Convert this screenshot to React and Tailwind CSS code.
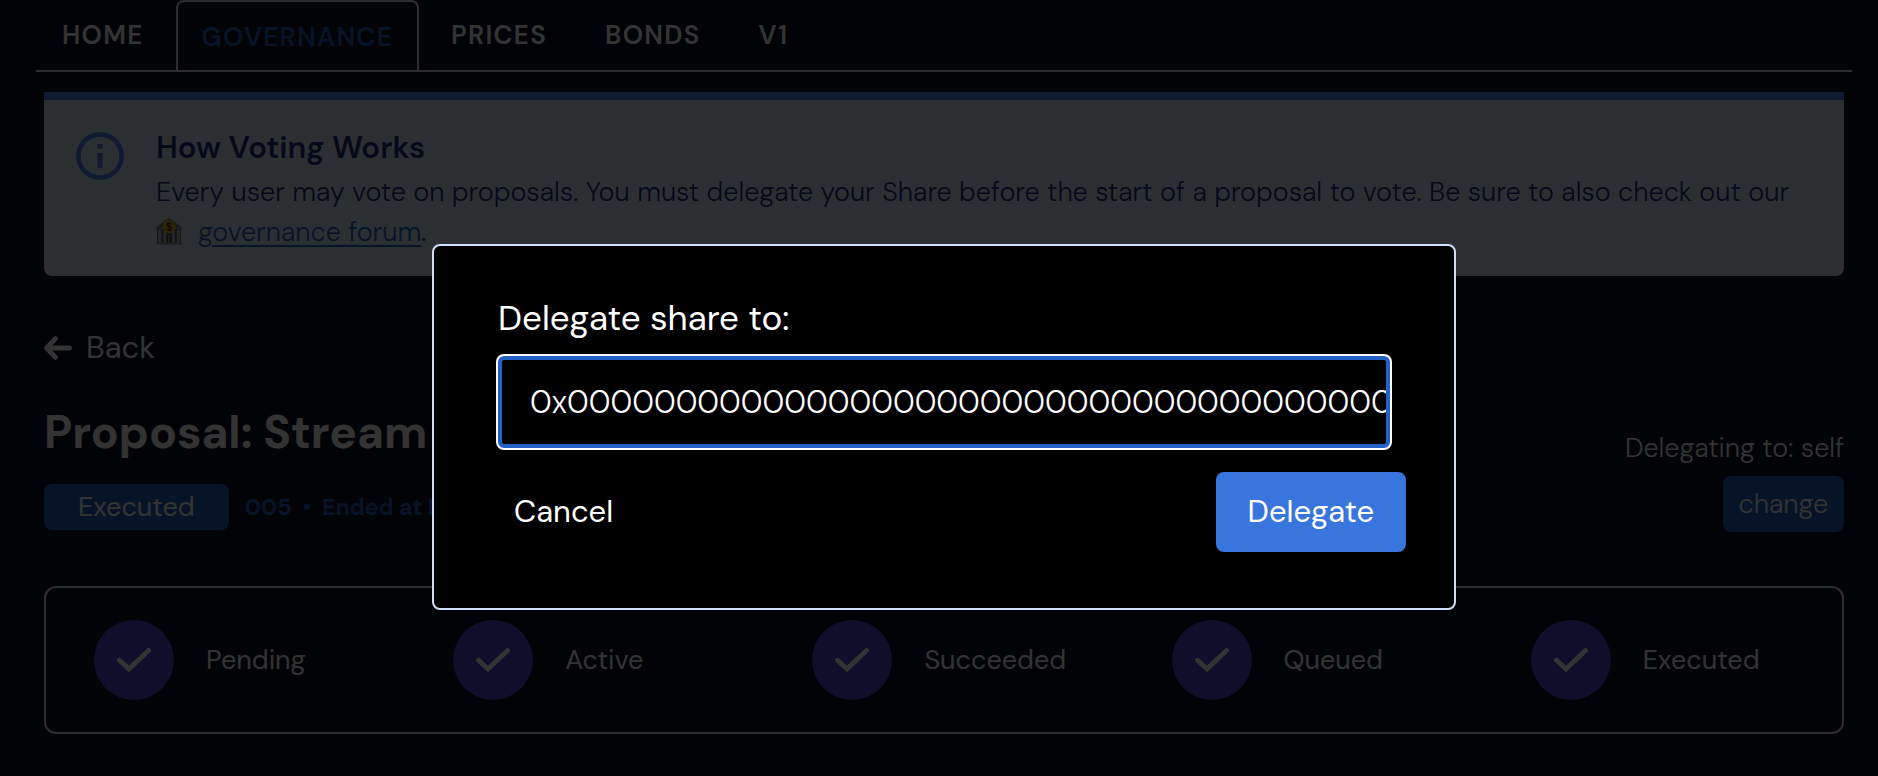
import React, { useState } from 'react';

const tabs = ['Home', 'Governance', 'Prices', 'Bonds', 'V1'];
const steps = ['Pending', 'Active', 'Succeeded', 'Queued', 'Executed'];

function InfoIcon() {
  return (
    <svg className="mt-8 size-12 shrink-0 text-[#5080f5]" viewBox="0 0 48 48" fill="none" aria-hidden="true">
      <circle cx="24" cy="24" r="21.6" stroke="currentColor" strokeWidth="4.8" />
      <rect x="21.4" y="12" width="5.2" height="4.6" fill="currentColor" />
      <rect x="21.4" y="21" width="5.2" height="15" fill="currentColor" />
    </svg>
  );
}

function BankIcon() {
  return (
    <svg className="inline-block h-7 w-[26px] align-[-4px]" viewBox="0 0 26 28" aria-hidden="true">
      <path d="M0 10 13 0.5 26 10v2.5H0z" fill="#8f9599" />
      <path d="M2.5 10 13 2.5 23.5 10z" fill="#6b7175" />
      <rect x="1" y="12" width="24" height="14" fill="#5a6064" />
      <rect x="2" y="12.5" width="3.4" height="13.5" fill="#b9bdbf" />
      <rect x="7.4" y="12.5" width="3" height="13.5" fill="#b9bdbf" />
      <rect x="15.8" y="12.5" width="3" height="13.5" fill="#b9bdbf" />
      <rect x="20.8" y="12.5" width="3.4" height="13.5" fill="#b9bdbf" />
      <rect x="10.6" y="18" width="5" height="8" fill="#28506e" />
      <rect x="12.4" y="18" width="1.4" height="8" fill="#c8a020" />
      <rect x="0" y="25.6" width="26" height="1.9" fill="#8f9599" />
      <circle cx="13.2" cy="9.6" r="6.6" fill="#e0b414" />
      <path
        d="M15.4 7.6c-.3-1-1.2-1.5-2.2-1.5-1.3 0-2.2.7-2.2 1.7 0 2.4 4.5 1.2 4.5 3.7 0 1-.9 1.7-2.3 1.7-1.2 0-2.1-.6-2.4-1.6M13.2 5v9.2"
        fill="none"
        stroke="#4a3c10"
        strokeWidth="1.2"
      />
    </svg>
  );
}

function ArrowLeft() {
  return (
    <svg className="h-6 w-7" viewBox="0 0 28 24" fill="none" stroke="currentColor" strokeWidth="4.8" strokeLinecap="round" strokeLinejoin="round" aria-hidden="true">
      <path d="M11.5 2.6 2.6 12l8.9 9.4M3 12h22.6" />
    </svg>
  );
}

function Check() {
  return (
    <svg className="h-6 w-[34px]" viewBox="0 0 34 24" fill="none" stroke="currentColor" strokeWidth="4.8" strokeLinecap="round" strokeLinejoin="miter" aria-hidden="true">
      <path d="M2.5 12.2 12 21 31.5 2.5" />
    </svg>
  );
}

export default function App() {
  const [address, setAddress] = useState('0x' + '0'.repeat(40));
  return (
    <div className="relative min-h-screen bg-[#050f23] pr-[26px] pl-9 font-['DM_Sans',Inter,sans-serif] text-white">
      <nav className="flex gap-1.5 border-b-2 border-[#e2e2e2]">
        {tabs.map((tab) =>
          tab === 'Governance' ? (
            <a key={tab} href="#governance" aria-current="page" className="flex h-[70px] items-center rounded-t-lg border-x-2 border-t-2 border-[#e2e2e2] px-6 pt-0.5 text-[26px] font-semibold tracking-wider text-[#2464c0] uppercase">
              {tab}
            </a>
          ) : (
            <a key={tab} href={'#' + tab.toLowerCase()} className="flex h-[70px] items-center border-x-2 border-transparent px-6 text-[26px] font-semibold tracking-wider uppercase">
              {tab}
            </a>
          ),
        )}
      </nav>

      <main className="px-2 pt-5">
        <section className="flex gap-8 rounded-b-lg border-t-8 border-[#5080f5] bg-[#dcebf5] px-8 pb-6 text-[#1e2d82]">
          <InfoIcon />
          <div className="pt-7">
            <h2 className="text-[31px] leading-10 font-semibold">How Voting Works</h2>
            <p className="pt-1 text-[27px] leading-10 font-light">
              Every user may vote on proposals. You must delegate your Share before the start of a proposal to vote. Be sure to also check out our{' '}
              <span className="whitespace-nowrap">
                <BankIcon />
                <a href="#forum" className="ml-4 text-[#2464c8] underline decoration-2 underline-offset-4">governance forum</a>.
              </span>
            </p>
          </div>
        </section>

        <a href="#back" className="mt-12 flex w-fit items-center gap-3.5 text-[31px] leading-12">
          <ArrowLeft />
          Back
        </a>

        <header className="mt-6 flex items-end justify-between">
          <div>
            <h1 className="text-[46px] leading-[72px] font-bold">Proposal: Stream</h1>
            <div className="mt-4 flex items-center gap-4 pb-0.5">
              <span className="rounded-lg bg-[#2464c0] px-[34px] text-[27px] leading-[46px]">Executed</span>
              <span className="text-[23px] font-bold text-[#2464c0]">005 &nbsp;•&nbsp; Ended at block</span>
            </div>
          </div>
          <div className="flex flex-col items-end gap-2 text-[27px] font-light">
            <p className="leading-10">Delegating to: self</p>
            <button type="button" className="rounded-lg bg-[#2464c0] px-4 leading-[56px]">change</button>
          </div>
        </header>

        <ol className="mt-[54px] grid grid-cols-5 rounded-xl border-2 border-[#e2e2e2] py-8">
          {steps.map((step) => (
            <li key={step} className="flex items-center gap-8 pl-12 text-[27px]">
              <span className="flex size-20 items-center justify-center rounded-full bg-[#4b46d7]">
                <Check />
              </span>
              {step}
            </li>
          ))}
        </ol>
      </main>

      <div className="absolute inset-0 flex items-start justify-center bg-black/80 pt-[244px] pl-[10px]">
        <form
          role="dialog"
          aria-modal="true"
          onSubmit={(e) => e.preventDefault()}
          className="w-full max-w-5xl rounded-lg border-2 border-[#cfdff5] bg-black px-16 pt-12 pb-14"
        >
          <label htmlFor="delegate-address" className="mb-3.5 block text-[35px] leading-12">
            Delegate share to:
          </label>
          <input
            id="delegate-address"
            type="text"
            value={address}
            onChange={(e) => setAddress(e.target.value)}
            className="block h-[92px] w-full rounded-md border-4 border-[#2560c8] bg-black pl-7 text-[32px] font-light ring-2 ring-white outline-none"
          />
          <div className="-mx-4 mt-6 flex justify-between text-[31px]">
            <button type="button" className="h-20 rounded-lg px-8">Cancel</button>
            <button type="submit" className="h-20 rounded-lg bg-[#3875dc] px-8">Delegate</button>
          </div>
        </form>
      </div>
    </div>
  );
}
